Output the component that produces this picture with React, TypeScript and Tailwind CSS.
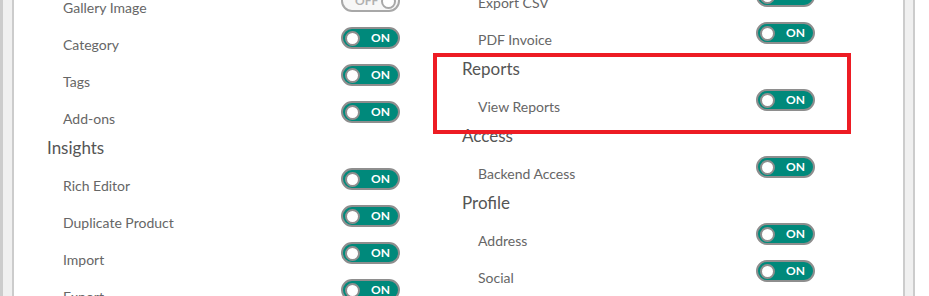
import React from "react";

type Item = { kind: "item"; label: string; on: boolean } | { kind: "heading"; label: string };

const leftCol: Item[] = [
  { kind: "item", label: "Gallery Image", on: false },
  { kind: "item", label: "Category", on: true },
  { kind: "item", label: "Tags", on: true },
  { kind: "item", label: "Add-ons", on: true },
  { kind: "heading", label: "Insights" },
  { kind: "item", label: "Rich Editor", on: true },
  { kind: "item", label: "Duplicate Product", on: true },
  { kind: "item", label: "Import", on: true },
  { kind: "item", label: "Export", on: true },
];

const rightCol: Item[] = [
  { kind: "item", label: "Export CSV", on: true },
  { kind: "item", label: "PDF Invoice", on: true },
  { kind: "heading", label: "Reports" },
  { kind: "item", label: "View Reports", on: true },
  { kind: "heading", label: "Access" },
  { kind: "item", label: "Backend Access", on: true },
  { kind: "heading", label: "Profile" },
  { kind: "item", label: "Address", on: true },
  { kind: "item", label: "Social", on: true },
];

function Toggle({ on }: { on: boolean }) {
  if (on) {
    return (
      <div className="relative w-[59px] h-[22px] shrink-0 rounded-full border-2 border-[#8e8e8e] bg-[#00897b]">
        <div className="absolute left-[2px] top-[1.5px] w-[15px] h-[15px] rounded-full bg-white border-2 border-[#8e8e8e]" />
        <span className="absolute left-[28px] top-[1px] text-[12px] leading-[16px] font-bold text-white">ON</span>
      </div>
    );
  }
  return (
    <div className="relative w-[59px] h-[22px] shrink-0 rounded-full border-2 border-[#a8a8a8] bg-[#f7f7f7]">
      <div className="absolute right-[2px] top-[1.5px] w-[15px] h-[15px] rounded-full bg-white border-2 border-[#a8a8a8]" />
      <span className="absolute left-[12px] top-[1px] text-[12px] leading-[16px] font-bold text-[#b0b0b0]">OFF</span>
    </div>
  );
}

function Column({ items, offset }: { items: Item[]; offset: string }) {
  return (
    <div className={`flex flex-col pl-[33px] pr-[29px] ${offset}`}>
      {items.map((it, i) =>
        it.kind === "heading" ? (
          <div key={i} className="h-[30px] text-[17px] leading-[20px] text-[#555]">
            {it.label}
          </div>
        ) : (
          <div key={i} className="h-[37px] flex justify-between items-start pl-[16px]">
            <span className="pt-[8px] text-[14px] leading-[20px] text-[#666]">{it.label}</span>
            <Toggle on={it.on} />
          </div>
        )
      )}
    </div>
  );
}

export default function App() {
  return (
    <div
      className="relative w-[929px] h-[296px] overflow-hidden bg-white flex"
      style={{ fontFamily: "Lato, 'Open Sans', sans-serif" }}
    >
      <div className="w-[14px] h-full shrink-0 border-l-[3px] border-r-[2px] border-[#cccccc] bg-[#f0f0f0]" />
      <div className="w-[889px] shrink-0 grid grid-cols-[415px_415px] content-start">
        <Column items={leftCol} offset="mt-[-10px]" />
        <Column items={rightCol} offset="mt-[-15px]" />
      </div>
      <div className="w-[12px] h-full shrink-0 border-x-2 border-[#cccccc] bg-[#f0f0f0]" />
      <div className="absolute left-[433px] top-[53px] w-[418px] h-[81px] border-4 border-[#ed1c24]" />
    </div>
  );
}
